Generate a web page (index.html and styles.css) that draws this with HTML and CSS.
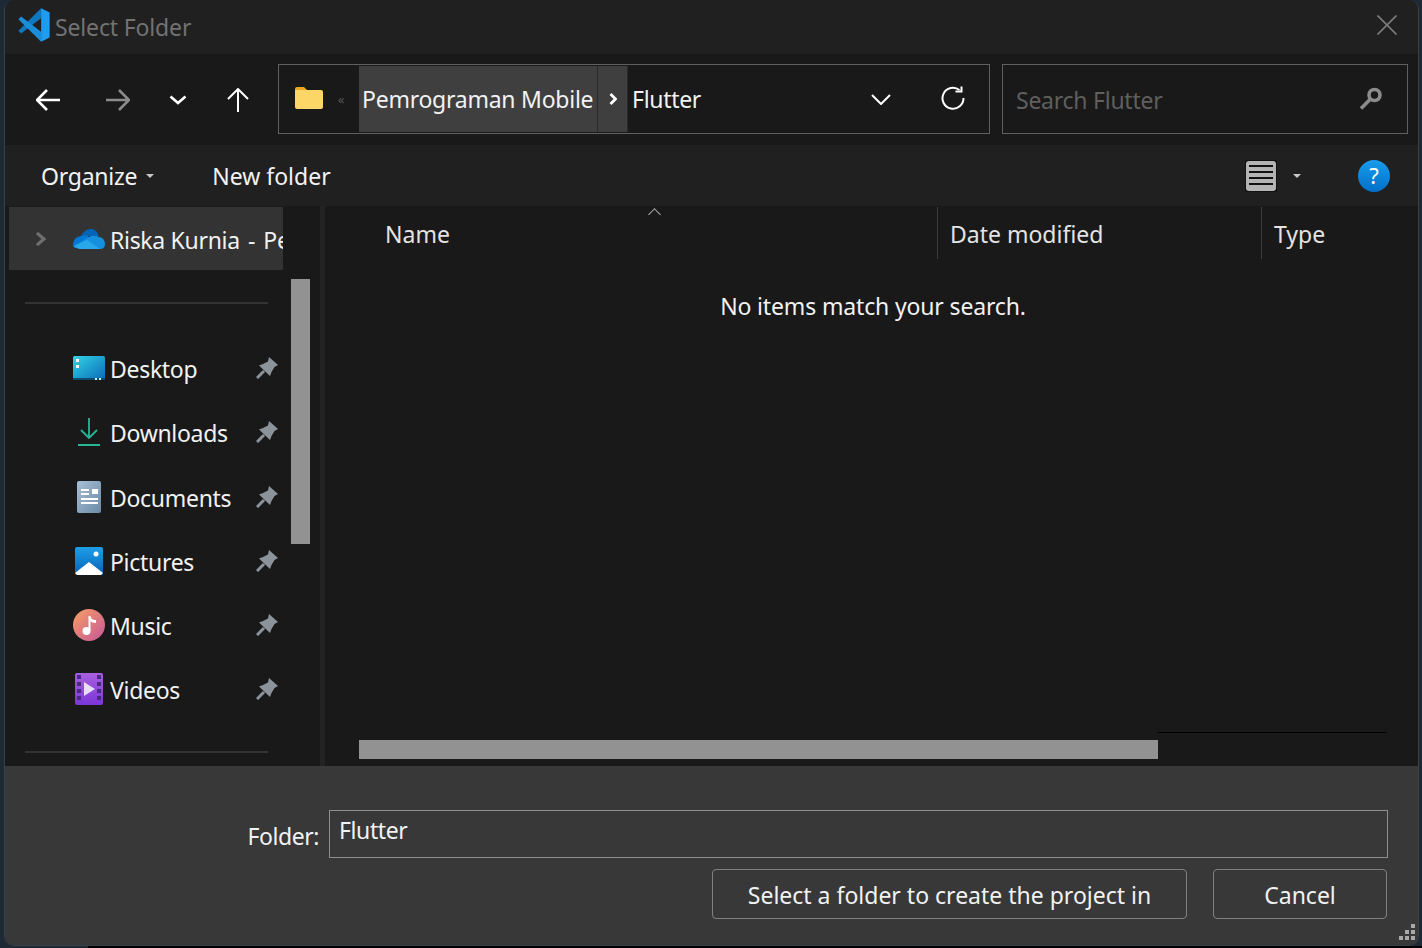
FILE: index.html
```html
<!DOCTYPE html>
<html lang="en">

<head>
    <meta charset="UTF-8">
    <meta name="viewport" content="width=device-width, initial-scale=1.0">
    <title>Select Folder</title>
    <link rel="stylesheet" href="styles.css">
</head>

<body>
    <div class="window">
        <div class="titlebar">
            <svg class="app-logo" viewBox="0 0 100 100">
                <polygon points="4,67 12,75 71,30 71,1" fill="#0e77bd" />
                <polygon points="4,33 12,25 71,70 71,99" fill="#1a8ed8" />
                <polygon points="71,1 96,13 96,87 71,99" fill="#1f9cf0" />
            </svg>
            <span class="title-text">Select Folder</span>
            <svg class="close-icon" viewBox="0 0 20 20">
                <path d="M0.5 0.5 L19.5 19.5 M19.5 0.5 L0.5 19.5" />
            </svg>
        </div>

        <div class="navbar">
            <svg class="nav-icon back" viewBox="0 0 24 24"><path d="M1 12 H24 M11 2 L1 12 L11 22" /></svg>
            <svg class="nav-icon forward" viewBox="0 0 24 24"><path d="M0 12 H23 M13 2 L23 12 L13 22" /></svg>
            <svg class="nav-icon recent" viewBox="0 0 18 10"><path d="M1.5 1.5 L9 8 L16.5 1.5" /></svg>
            <svg class="nav-icon up" viewBox="0 0 24 24"><path d="M12 24 V1 M2 11 L12 1 L22 11" /></svg>

            <div class="addressbar">
                <svg class="folder-icon" viewBox="0 0 28 22">
                    <path d="M0 2 Q0 0 2 0 H9 L12 3 H0 Z" fill="#e8a822" />
                    <path d="M0 3 H26 Q28 3 28 5 V20 Q28 22 26 22 H2 Q0 22 0 20 Z" fill="#fcd667" />
                </svg>
                <span class="overflow-mark">«</span>
                <span class="crumb">Pemrograman Mobile</span>
                <span class="crumb-sep">
                    <svg viewBox="0 0 8 12"><path d="M1.5 1 L6.5 6 L1.5 11" /></svg>
                </span>
                <span class="crumb-last">Flutter</span>
                <svg class="addr-chevron" viewBox="0 0 20 11"><path d="M1 1 L10 10 L19 1" /></svg>
                <svg class="refresh-icon" viewBox="0 0 24 24">
                    <path d="M18.5 4 A10.5 10.5 0 1 0 22.5 12" />
                    <path class="refresh-head" d="M14.5 5.5 H20.5 V0.5" />
                </svg>
            </div>

            <div class="searchbar">
                <span class="search-text">Search Flutter</span>
                <svg class="key-icon" viewBox="0 0 24 24">
                    <circle cx="15.5" cy="8" r="5.5" />
                    <path d="M11 12.5 L2 21.5" />
                </svg>
            </div>
        </div>

        <div class="toolbar">
            <span class="tool-label organize">Organize</span>
            <span class="caret organize-caret"></span>
            <span class="tool-label new-folder">New folder</span>
            <span class="toolbar-fill"></span>
            <svg class="view-icon" viewBox="0 0 32 32">
                <rect width="32" height="32" rx="4" fill="#b4b4b4" />
                <path d="M4 6 H28 M4 12 H28 M4 18 H28 M4 24 H28" />
            </svg>
            <span class="caret view-caret"></span>
            <div class="help-icon">?</div>
        </div>

        <div class="main">
            <div class="sidebar">
                <div class="tree">
                    <div class="tree-row onedrive">
                        <svg class="expander" viewBox="0 0 12 16"><path d="M2 2 L9 8 L2 14" /></svg>
                        <svg class="tree-icon" viewBox="0 0 32 22">
                            <path d="M8 8 Q12 0 19 1 Q24 2 26 8 Z" fill="#0364b8" />
                            <path d="M0 17 Q0 9 8 8 L14 7 L24 20 H3 Q0 20 0 17 Z" fill="#0078d4" />
                            <path d="M14 10 Q20 6 26 9 Q32 10 32 16 Q32 21 27 21 H7 Q4 21 1 18 Z" fill="#1490df" />
                            <path d="M1 18 L14 12 L27 21 H7 Q4 21 1 18 Z" fill="#28a8ea" />
                        </svg>
                        <span class="tree-label">Riska Kurnia<span class="name-rest"> - Personal</span></span>
                    </div>

                    <div class="tree-sep first"></div>

                    <div class="tree-row">
                        <svg class="tree-icon" viewBox="0 0 32 24">
                            <defs>
                                <linearGradient id="deskFill" x1="0" y1="0" x2="1" y2="1">
                                    <stop offset="0" stop-color="#33d6e6" />
                                    <stop offset="1" stop-color="#0a68b8" />
                                </linearGradient>
                            </defs>
                            <rect width="32" height="24" rx="1.5" fill="url(#deskFill)" />
                            <rect y="22" width="32" height="2" fill="#0c4a6e" />
                            <rect x="3" y="3" width="3" height="3" fill="#fff" />
                            <rect x="3" y="9" width="3" height="3" fill="#fff" />
                            <rect x="22" y="22" width="2" height="2" fill="#cfe" />
                            <rect x="26" y="22" width="2" height="2" fill="#cfe" />
                        </svg>
                        <span class="tree-label">Desktop</span>
                        <svg class="pin" viewBox="0 0 22 22"><use href="#pinShape" /></svg>
                    </div>

                    <div class="tree-row">
                        <svg class="tree-icon" viewBox="0 0 32 28">
                            <path class="dl-stroke" d="M16 0 V20 M8 12 L16 20 L24 12 M5 27 H27" />
                        </svg>
                        <span class="tree-label">Downloads</span>
                        <svg class="pin" viewBox="0 0 22 22"><use href="#pinShape" /></svg>
                    </div>

                    <div class="tree-row documents">
                        <svg class="tree-icon" viewBox="0 0 32 32">
                            <defs>
                                <linearGradient id="docFill" x1="0" y1="0" x2="1" y2="1">
                                    <stop offset="0" stop-color="#a7bfd8" />
                                    <stop offset="1" stop-color="#6c8aa6" />
                                </linearGradient>
                            </defs>
                            <rect x="4" y="0" width="24" height="32" rx="2" fill="url(#docFill)" />
                            <rect x="19" y="8" width="6" height="5" fill="#fff" />
                            <path class="doc-lines" d="M8 9 H16 M8 13 H16 M8 18 H25 M8 22 H25" />
                        </svg>
                        <span class="tree-label">Documents</span>
                        <svg class="pin" viewBox="0 0 22 22"><use href="#pinShape" /></svg>
                    </div>

                    <div class="tree-row">
                        <svg class="tree-icon" viewBox="0 0 32 32">
                            <defs>
                                <linearGradient id="picFill" x1="0" y1="0" x2="0" y2="1">
                                    <stop offset="0" stop-color="#1f9fe8" />
                                    <stop offset="1" stop-color="#0462b8" />
                                </linearGradient>
                            </defs>
                            <rect x="2" y="2" width="28" height="28" rx="2" fill="url(#picFill)" />
                            <polygon points="2,28 16,17 30,28 28,30 4,30" fill="#fff" />
                            <circle cx="23" cy="9" r="2.5" fill="#fff" />
                        </svg>
                        <span class="tree-label">Pictures</span>
                        <svg class="pin" viewBox="0 0 22 22"><use href="#pinShape" /></svg>
                    </div>

                    <div class="tree-row">
                        <svg class="tree-icon" viewBox="0 0 32 32">
                            <defs>
                                <linearGradient id="musicFill" x1="0" y1="0" x2="1" y2="1">
                                    <stop offset="0" stop-color="#f6a063" />
                                    <stop offset="1" stop-color="#c7569a" />
                                </linearGradient>
                            </defs>
                            <circle cx="16" cy="16" r="16" fill="url(#musicFill)" />
                            <circle cx="13.5" cy="22" r="4" fill="#fff" />
                            <path d="M15.5 22 V7 H17.5 C18 10 20 11 23 11 V14 C20 14 18.5 13 17.5 12 V22 Z" fill="#fff" />
                        </svg>
                        <span class="tree-label">Music</span>
                        <svg class="pin" viewBox="0 0 22 22"><use href="#pinShape" /></svg>
                    </div>

                    <div class="tree-row">
                        <svg class="tree-icon" viewBox="0 0 32 32">
                            <defs>
                                <linearGradient id="videoFill" x1="0" y1="0" x2="0" y2="1">
                                    <stop offset="0" stop-color="#a85fe0" />
                                    <stop offset="1" stop-color="#7a36d8" />
                                </linearGradient>
                            </defs>
                            <rect x="2" width="28" height="32" rx="2" fill="url(#videoFill)" />
                            <path class="film-holes" d="M4 2 h4 v4 h-4 z M4 9 h4 v4 h-4 z M4 16 h4 v4 h-4 z M4 23 h4 v4 h-4 z M24 2 h4 v4 h-4 z M24 9 h4 v4 h-4 z M24 16 h4 v4 h-4 z M24 23 h4 v4 h-4 z" />
                            <polygon points="11,9 22,16 11,23" fill="#e8dcf8" />
                        </svg>
                        <span class="tree-label">Videos</span>
                        <svg class="pin" viewBox="0 0 22 22"><use href="#pinShape" /></svg>
                    </div>

                    <div class="tree-sep last"></div>
                </div>
                <div class="tree-scroll">
                    <div class="tree-thumb"></div>
                </div>
            </div>

            <div class="splitter"></div>

            <div class="list">
                <div class="list-header">
                    <div class="col col-name">Name<span class="sort-mark"></span></div>
                    <div class="col col-date">Date modified</div>
                    <div class="col col-type">Type</div>
                </div>
                <div class="empty-msg">No items match your search.</div>
                <div class="hscroll">
                    <div class="hscroll-thumb"></div>
                    <div class="hscroll-line"></div>
                </div>
            </div>
        </div>

        <div class="footer">
            <div class="folder-row">
                <span class="folder-label">Folder:</span>
                <div class="folder-input">Flutter</div>
            </div>
            <div class="button-row">
                <div class="btn btn-select">Select a folder to create the project in</div>
                <div class="btn btn-cancel">Cancel</div>
            </div>
            <svg class="gripper" viewBox="0 0 16 16">
                <path d="M12 0 h4 v4 h-4 z M6 6 h4 v4 h-4 z M12 6 h4 v4 h-4 z M0 12 h4 v4 h-4 z M6 12 h4 v4 h-4 z M12 12 h4 v4 h-4 z" />
            </svg>
        </div>
    </div>
    <div class="desk-strip"></div>

    <svg class="defs-only" width="0" height="0">
        <defs>
            <g id="pinShape">
                <polygon points="13,0 22,8 18.5,10 15.5,15 14,19 3,8.5 7,7 12,4.5" fill="#8b949b" />
                <path d="M8 14 L1 21" stroke="#8b949b" stroke-width="3" />
            </g>
        </defs>
    </svg>
</body>

</html>
```

FILE: styles.css
```css
* {
    box-sizing: border-box;
}

html, body {
    height: 100%;
}

body {
    margin: 0;
    background-color: #1d2935;
    font-family: "Noto Sans", "Open Sans", sans-serif;
    font-size: 23px;
    color: #f2f2f2;
    overflow: hidden;
}

svg {
    display: block;
    flex: none;
}

.defs-only {
    position: absolute;
}

.window {
    display: flex;
    flex-direction: column;
    width: 1415px;
    height: 946px;
    margin-left: 4px;
    border: 1px solid #3a4047;
    border-top: none;
    border-radius: 10px;
    overflow: hidden;
    background-color: #202020;
}

.desk-strip {
    height: 2px;
    background: linear-gradient(90deg, #1d2935 88px, #000 88px);
}

/* title bar */
.titlebar {
    display: flex;
    align-items: center;
    height: 54px;
    padding: 0 21px 0 12px;
    background-color: #202020;
}

.app-logo {
    width: 34px;
    height: 34px;
    margin-top: -4px;
}

.title-text {
    margin-left: 4px;
    color: #727272;
    letter-spacing: -0.15px;
}

.close-icon {
    width: 20px;
    height: 20px;
    margin-left: auto;
    margin-top: -5px;
    fill: none;
    stroke: #7c7c7c;
    stroke-width: 1.6;
}

/* nav bar */
.navbar {
    display: flex;
    align-items: center;
    height: 91px;
    padding: 0 0 1px 31px;
    background-color: #191919;
}

.nav-icon {
    width: 24px;
    height: 24px;
    margin-top: 1px;
    fill: none;
    stroke: #fff;
    stroke-width: 2.6;
}

.nav-icon.forward {
    margin-left: 46px;
    stroke: #8c8c8c;
}

.nav-icon.recent {
    width: 18px;
    height: 10px;
    margin-left: 39px;
}

.nav-icon.up {
    margin-left: 39px;
    stroke-width: 2;
}

.addressbar {
    display: flex;
    align-items: center;
    width: 712px;
    height: 70px;
    margin-left: 28px;
    padding: 1px;
    border: 1px solid #606060;
}

.folder-icon {
    width: 28px;
    height: 22px;
    margin: -3px 0 0 15px;
}

.overflow-mark {
    width: 36px;
    text-align: center;
    font-size: 13px;
    color: #555;
}

.crumb {
    display: flex;
    align-items: center;
    height: 66px;
    padding: 0 3px;
    width: 238px;
    white-space: nowrap;
    letter-spacing: -0.25px;
    background-color: #3f3f3f;
}

.crumb-sep {
    display: flex;
    align-items: center;
    justify-content: center;
    width: 31px;
    height: 66px;
    border-left: 1px solid #2a2a2a;
    border-right: 1px solid #2a2a2a;
    background-color: #3f3f3f;
}

.crumb-sep svg {
    width: 8px;
    height: 12px;
    fill: none;
    stroke: #fff;
    stroke-width: 2.8;
}

.crumb-last {
    margin-left: 4px;
    letter-spacing: -0.3px;
}

.addr-chevron {
    width: 20px;
    height: 11px;
    margin-left: auto;
    fill: none;
    stroke: #fff;
    stroke-width: 2;
}

.refresh-icon {
    width: 24px;
    height: 24px;
    margin: -3px 23px 0 50px;
    fill: none;
    stroke: #fff;
    stroke-width: 2;
}

.searchbar {
    display: flex;
    align-items: center;
    width: 406px;
    height: 70px;
    margin-left: 12px;
    padding: 0 24px 0 13px;
    border: 1px solid #606060;
}

.search-text {
    margin-top: 1px;
    color: #5f5f5f;
    letter-spacing: -0.25px;
}

.key-icon {
    width: 24px;
    height: 24px;
    margin-left: auto;
    fill: none;
    stroke: #8c8c8c;
    stroke-width: 3.6;
}

/* toolbar */
.toolbar {
    display: flex;
    align-items: center;
    height: 61px;
    padding: 0 28px 0 36px;
    background-color: #202020;
}

.tool-label {
    margin-top: 1px;
}

.organize {
    letter-spacing: -0.25px;
}

.caret {
    width: 0;
    height: 0;
    border-left: 4.5px solid transparent;
    border-right: 4.5px solid transparent;
    border-top: 4.5px solid #c8c8c8;
}

.organize-caret {
    margin-left: 9px;
}

.new-folder {
    margin-left: 58px;
}

.toolbar-fill {
    flex: 1;
}

.view-icon {
    width: 32px;
    height: 32px;
    fill: none;
    stroke: #111;
    stroke-width: 2;
}

.view-caret {
    margin-left: 16px;
}

.help-icon {
    width: 32px;
    height: 32px;
    margin-left: 57px;
    border-radius: 50%;
    background: linear-gradient(#1a9cec, #0070c8);
    color: #fff;
    font-size: 22px;
    line-height: 30px;
    text-align: center;
}

/* main area */
.main {
    display: flex;
    flex: 1;
    min-height: 0;
    background-color: #191919;
}

.sidebar {
    display: flex;
    width: 315px;
    padding-left: 4px;
}

.tree {
    width: 274px;
    overflow: hidden;
}

.tree-row {
    display: flex;
    align-items: center;
    height: 64px;
    padding-left: 64px;
}

.tree-row.documents {
    margin-top: 1px;
}

.tree-row.onedrive {
    height: 63px;
    margin-top: 1px;
    padding: 1px 0 0 26px;
    background-color: #333;
    white-space: nowrap;
}

.name-rest {
    word-spacing: 2.5px;
}

.expander {
    width: 12px;
    height: 16px;
    margin-right: 26px;
    fill: none;
    stroke: #707070;
    stroke-width: 3;
}

.tree-icon {
    width: 32px;
    height: 32px;
}

.tree-label {
    margin: 2px 0 0 5px;
    letter-spacing: -0.3px;
}

.pin {
    width: 22px;
    height: 22px;
    margin-left: auto;
    margin-right: 5px;
}

.tree-sep {
    height: 2px;
    margin: 0 15px 0 16px;
    background-color: #333;
}

.tree-sep.first {
    margin-top: 32px;
    margin-bottom: 32px;
}

.tree-sep.last {
    margin-top: 30px;
}

.dl-stroke {
    fill: none;
    stroke: #25b795;
    stroke-width: 1.8;
}

.doc-lines {
    fill: none;
    stroke: #fff;
    stroke-width: 2;
}

.film-holes {
    fill: #4a2a80;
}

.tree-scroll {
    flex: 1;
    padding: 73px 10px 0 8px;
}

.tree-thumb {
    height: 265px;
    background-color: #929292;
}

.splitter {
    width: 5px;
    background-color: #232323;
}

/* file list */
.list {
    display: flex;
    flex: 1;
    flex-direction: column;
    min-width: 0;
}

.list-header {
    display: flex;
    height: 53px;
    color: #e4e4e4;
}

.col {
    display: flex;
    align-items: center;
    padding: 2px 0 0 12px;
    height: 52px;
    margin-top: 1px;
    border-left: 1px solid #3c3c3c;
}

.col-name {
    position: relative;
    width: 612px;
    padding-left: 60px;
    border-left: none;
}

.col-date {
    width: 324px;
}

.sort-mark {
    position: absolute;
    left: 325px;
    top: 3px;
    width: 9px;
    height: 9px;
    border-left: 1px solid #b0b0b0;
    border-top: 1px solid #b0b0b0;
    transform: rotate(45deg);
}

.empty-msg {
    flex: 1;
    padding: 30px 0 0 3px;
    text-align: center;
    line-height: 34px;
    letter-spacing: -0.15px;
}

.hscroll {
    display: flex;
    height: 34px;
    padding-left: 34px;
}

.hscroll-thumb {
    width: 799px;
    height: 19px;
    margin-top: 8px;
    background-color: #929292;
}

.hscroll-line {
    width: 228px;
    height: 1px;
    background-color: #000;
}

/* bottom panel */
.footer {
    position: relative;
    height: 179px;
    padding: 44px 30px 0 0;
    background-color: #383838;
}

.folder-row {
    display: flex;
    justify-content: flex-end;
}

.folder-label {
    margin-top: 6px;
    margin-right: 10px;
    line-height: 40px;
    letter-spacing: -0.45px;
}

.folder-input {
    width: 1059px;
    height: 48px;
    padding-left: 9px;
    border: 1px solid #8f8f8f;
    line-height: 39px;
    letter-spacing: -0.4px;
}

.button-row {
    display: flex;
    justify-content: flex-end;
    gap: 26px;
    margin: 11px 1px 0 0;
}

.btn {
    height: 50px;
    border: 1px solid #808080;
    border-radius: 4px;
    line-height: 50px;
    text-align: center;
}

.btn-select {
    width: 475px;
}

.btn-cancel {
    width: 174px;
}

.gripper {
    position: absolute;
    right: 3px;
    bottom: 5px;
    width: 16px;
    height: 16px;
    fill: #a8a8a8;
}
```
